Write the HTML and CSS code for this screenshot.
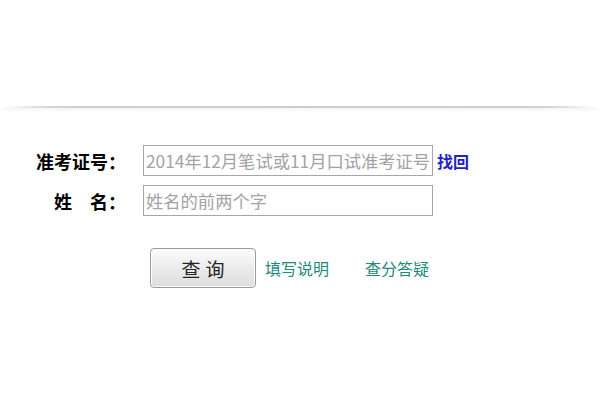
FILE: index.html
```html
<!DOCTYPE html>
<html lang="zh-CN">
<head>
<meta charset="utf-8">
<link rel="stylesheet" href="styles.css">
</head>
<body>
<div class="top"></div>
<div class="rule"></div>
<form class="form">
  <div class="row">
    <label class="label">准考证号：</label>
    <input class="field" type="text" placeholder="2014年12月笔试或11月口试准考证号">
    <a class="find" href="#">找回</a>
  </div>
  <div class="row">
    <label class="label">姓&emsp;名：</label>
    <input class="field" type="text" placeholder="姓名的前两个字">
  </div>
  <div class="actions">
    <button class="btn" type="button">查询</button>
    <a class="link" href="#">填写说明</a>
    <a class="link" href="#">查分答疑</a>
  </div>
</form>
</body>
</html>
```

FILE: styles.css
```css
html, body {
  margin: 0;
  padding: 0;
  background: #fff;
  font-family: "Noto Sans CJK SC", "Noto Sans", sans-serif;
}
.top {
  height: 106px;
}
.rule {
  height: 2px;
  margin: 0 4px;
  background: linear-gradient(to right, rgba(210,215,210,0), #cfd4cf 8%, #c8cec8 50%, #cfd4cf 92%, rgba(210,215,210,0));
  box-shadow: 0 2px 3px rgba(225,230,225,0.6);
}
.form {
  display: flex;
  flex-direction: column;
  padding-top: 37px;
}
.row {
  display: flex;
  align-items: center;
  margin-bottom: 9px;
}
.label {
  width: 143px;
  text-align: right;
  padding-right: 17px;
  box-sizing: border-box;
  font-size: 18px;
  font-weight: bold;
  color: #000;
}
.field {
  width: 290px;
  height: 31px;
  box-sizing: border-box;
  border: 1px solid #a6a6a6;
  padding: 0 2px;
  margin: 0;
  font-family: "Noto Sans CJK SC", sans-serif;
  font-size: 17.3px;
  color: #333;
  outline: none;
}
.field::placeholder {
  color: #a3a3a3;
}
.find {
  margin-left: 4px;
  font-size: 16px;
  font-weight: bold;
  color: #2323c8;
  text-decoration: none;
}
.actions {
  display: flex;
  align-items: center;
  padding-left: 150px;
  margin-top: 23px;
}
.btn {
  width: 106px;
  height: 40px;
  box-sizing: border-box;
  border: 1px solid #9a9a9a;
  border-radius: 4px;
  background: linear-gradient(#fbfbfb, #ececec 50%, #dcdcdc);
  box-shadow: inset 0 0 0 1px #fff;
  font-family: "Noto Sans CJK SC", sans-serif;
  font-size: 19px;
  letter-spacing: 5px;
  text-indent: 5px;
  color: #222;
  padding: 0;
}
.link {
  font-size: 16px;
  color: #23897a;
  text-decoration: none;
}
.btn + .link {
  margin-left: 9px;
}
.link + .link {
  margin-left: 36px;
}
```
